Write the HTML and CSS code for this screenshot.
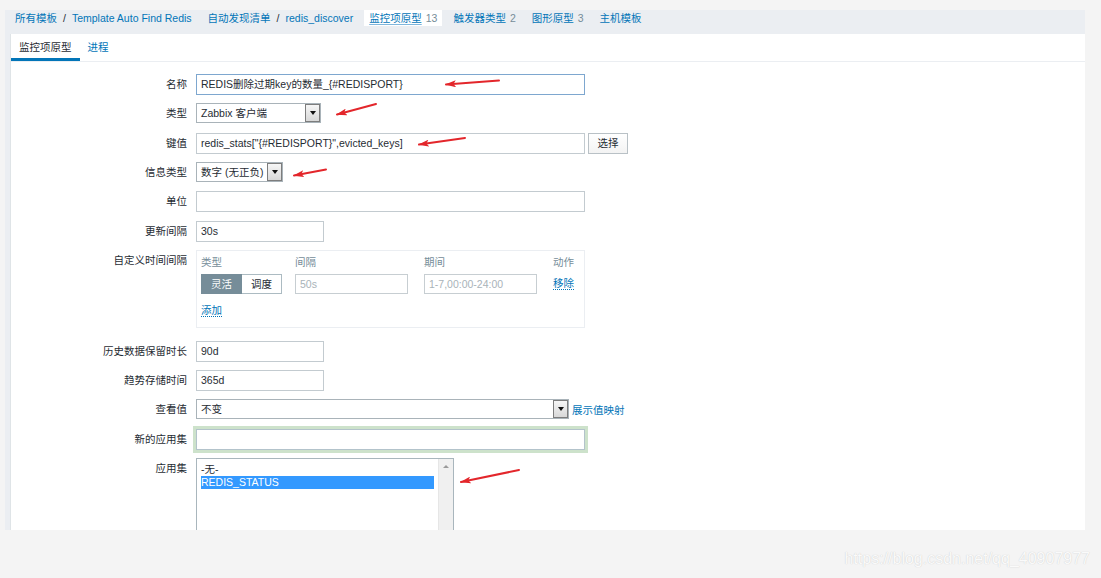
FILE: index.html
```html
<!DOCTYPE html>
<html>
<head>
<meta charset="utf-8">
<link rel="stylesheet" href="styles.css">
</head>
<body>
<div class="frame">
  <nav class="crumbs">
    <span class="crumb"><a>所有模板</a><span class="sep">/</span><a>Template Auto Find Redis</a></span>
    <span class="crumb"><a>自动发现清单</a><span class="sep">/</span><a>redis_discover</a></span>
    <span class="crumb active"><a>监控项原型</a><span class="count">13</span></span>
    <span class="crumb"><a>触发器类型</a><span class="count">2</span></span>
    <span class="crumb"><a>图形原型</a><span class="count">3</span></span>
    <span class="crumb"><a>主机模板</a></span>
  </nav>
  <div class="panel">
    <div class="tabs">
      <span class="tab on">监控项原型</span>
      <span class="tab">进程</span>
    </div>
    <div class="form">
      <div class="row">
        <label>名称</label>
        <div class="inp w-wide focus">REDIS删除过期key的数量_{#REDISPORT}</div>
      </div>
      <div class="row">
        <label>类型</label>
        <div class="sel w-type"><span class="txt">Zabbix 客户端</span><span class="arr"></span></div>
      </div>
      <div class="row">
        <label>键值</label>
        <div class="line">
          <div class="inp w-wide">redis_stats["{#REDISPORT}",evicted_keys]</div>
          <span class="btn">选择</span>
        </div>
      </div>
      <div class="row">
        <label>信息类型</label>
        <div class="sel w-info"><span class="txt">数字 (无正负)</span><span class="arr"></span></div>
      </div>
      <div class="row">
        <label>单位</label>
        <div class="inp w-wide"></div>
      </div>
      <div class="row">
        <label>更新间隔</label>
        <div class="inp w-short">30s</div>
      </div>
      <div class="row row-custom">
        <label>自定义时间间隔</label>
        <div class="custom">
          <div class="cgrid">
            <span class="ch">类型</span>
            <span class="ch">间隔</span>
            <span class="ch">期间</span>
            <span class="ch">动作</span>
            <div class="seg"><span class="on">灵活</span><span>调度</span></div>
            <div class="inp ph w-mid">50s</div>
            <div class="inp ph w-mid">1-7,00:00-24:00</div>
            <a class="dlink mid">移除</a>
          </div>
          <a class="dlink add">添加</a>
        </div>
      </div>
      <div class="row">
        <label>历史数据保留时长</label>
        <div class="inp w-short">90d</div>
      </div>
      <div class="row">
        <label>趋势存储时间</label>
        <div class="inp w-short">365d</div>
      </div>
      <div class="row">
        <label>查看值</label>
        <div class="line">
          <div class="sel w-view"><span class="txt">不变</span><span class="arr"></span></div>
          <a class="link">展示值映射</a>
        </div>
      </div>
      <div class="row">
        <label>新的应用集</label>
        <div class="inp w-wide glow"></div>
      </div>
      <div class="row">
        <label>应用集</label>
        <div class="listbox">
          <div class="opts">
            <div class="opt">-无-</div>
            <div class="opt selected">REDIS_STATUS</div>
          </div>
          <div class="sbar"><span class="up"></span></div>
        </div>
      </div>
    </div>
  </div>
</div>
<div class="watermark">https://blog.csdn.net/qq_40907977</div>

<svg class="notes" width="1101" height="578" viewBox="0 0 1101 578">
  <defs>
    <marker id="ah" markerWidth="11" markerHeight="7" refX="10" refY="3.5" orient="auto" markerUnits="userSpaceOnUse">
      <path d="M0,0 L11,3.5 L0,7 L2.5,3.5 z" fill="#e3262b"/>
    </marker>
  </defs>
  <g stroke="#e3262b" stroke-width="2" stroke-linecap="round" fill="none" marker-end="url(#ah)">
    <line x1="499" y1="80.5" x2="446" y2="84.5"/>
    <line x1="376" y1="104" x2="337" y2="114.5"/>
    <line x1="465" y1="138" x2="419" y2="144.5"/>
    <line x1="326" y1="169.5" x2="294" y2="175.5"/>
    <line x1="519" y1="470" x2="461" y2="482"/>
  </g>
</svg>
</body>
</html>
```

FILE: styles.css
```css
* { box-sizing: border-box; }
html, body { margin: 0; padding: 0; }
body {
  width: 1101px;
  height: 578px;
  overflow: hidden;
  position: relative;
  background: #f4f4f4;
  font-family: "Liberation Sans", "Noto Sans CJK SC", sans-serif;
  font-size: 10.5px;
  color: #1f2c33;
}
a { text-decoration: none; }

.frame {
  margin: 10px 16px 0 5px;
  height: 520px;
  background: #ebeef2;
  display: flex;
  flex-direction: column;
}

.crumbs {
  height: 24px;
  flex: none;
  display: flex;
  align-items: flex-start;
  padding-left: 5px;
  gap: 6px;
}
.crumb {
  display: flex;
  align-items: center;
  height: 16px;
  padding: 0 5px;
  white-space: nowrap;
  color: #0275b8;
  line-height: 14px;
}
.crumb a { color: #0275b8; }
.crumb .sep { color: #1f2c33; margin: 0 6px; }
.crumb.active { background: #fff; }
.crumb.active a { text-decoration: underline; text-decoration-color: #7fb6dc; text-underline-offset: 2px; }
.crumb .count { color: #768d99; margin-left: 4px; }

.panel {
  flex: 1;
  margin-left: 5px;
  background: #fff;
  border-left: 1px solid #dfe4e7;
  overflow: hidden;
}

.tabs {
  height: 28px;
  display: flex;
  border-bottom: 1px solid #ebeef2;
}
.tab {
  padding: 0 8px;
  height: 27px;
  line-height: 25px;
  padding-top: 1px;
  border-bottom: 3px solid transparent;
  color: #0275b8;
}
.tab.on { color: #1f2c33; border-bottom-color: #0275b8; }

.form { padding-top: 12px; }
.row {
  display: grid;
  grid-template-columns: 176px auto;
  column-gap: 9px;
  margin-bottom: 8.33px;
  justify-content: start;
  align-items: start;
}
.row label {
  text-align: right;
  line-height: 21px;
  white-space: nowrap;
}
.row-custom { margin-bottom: 12.7px; }

.line { display: flex; align-items: center; gap: 3px; }

.inp {
  height: 21px;
  border: 1px solid #c3cbd0;
  background: #fff;
  padding: 0 4px;
  line-height: 19px;
  white-space: nowrap;
  overflow: hidden;
}
.inp.focus { border-color: #7ea7cf; }
.inp.glow { border-color: #b3c3cb; box-shadow: 0 0 0 3px #cde2cb; }
.inp.ph { color: #a9b3b9; height: 20px; line-height: 18px; border-color: #c7ced2; }
.w-wide { width: 389px; }
.w-short { width: 128px; }
.w-mid { width: 113px; }

.btn {
  width: 40px;
  height: 21px;
  border: 1px solid #b9c1c6;
  background: linear-gradient(#ffffff, #f3f3f3);
  text-align: center;
  line-height: 19px;
}

.sel {
  display: flex;
  height: 20px;
  border: 1px solid #a9b3b9;
  background: #fff;
}
.sel .txt {
  flex: 1;
  padding-left: 4px;
  line-height: 18px;
  white-space: nowrap;
}
.sel .arr {
  width: 15px;
  margin: 0;
  border: 1px solid #7d7d7d;
  background: linear-gradient(#f6f6f6, #d8d8d8);
  display: flex;
  align-items: center;
  justify-content: center;
}
.sel .arr::after {
  content: "";
  border-left: 3px solid transparent;
  border-right: 3px solid transparent;
  border-top: 4px solid #111;
}
.w-type { width: 125px; }
.w-info { width: 87px; }
.w-view { width: 373px; }

.link { color: #0275b8; white-space: nowrap; }

.custom {
  width: 389px;
  height: 78px;
  border: 1px solid #ebeef2;
  padding: 5px 4px 0;
}
.cgrid {
  display: grid;
  grid-template-columns: 94px 129px 129px auto;
  row-gap: 5px;
  align-items: center;
}
.ch { color: #768d99; line-height: 13px; }
.seg { display: flex; }
.seg span {
  height: 20px;
  line-height: 18px;
  text-align: center;
  border: 1px solid #acbbc2;
  background: #fff;
}
.seg span:first-child { width: 41px; }
.seg span:last-child { width: 40px; border-left: none; }
.seg span.on { background: #768d99; border-color: #768d99; color: #fff; }

.dlink {
  color: #0275b8;
  border-bottom: 1px dotted #0275b8;
  line-height: 12px;
  justify-self: start;
}
.dlink.add { display: inline-block; margin-top: 10px; }

.listbox {
  width: 258px;
  height: 90px;
  border: 1px solid #a9b6bd;
  background: #fff;
  display: flex;
}
.opts { flex: 1; padding: 4px 4px 0 4px; }
.opt { line-height: 13px; height: 13px; white-space: nowrap; }
.opt.selected { background: #3399ff; color: #fff; }
.sbar {
  width: 15px;
  background: #f0f0f0;
  border-left: 1px solid #e6e6e6;
  display: flex;
  justify-content: center;
  padding-top: 6px;
}
.sbar .up {
  width: 0;
  height: 0;
  border-left: 3px solid transparent;
  border-right: 3px solid transparent;
  border-bottom: 3px solid #9a9a9a;
}

.watermark {
  margin-top: 20px;
  padding-right: 11px;
  text-align: right;
  font-family: "Liberation Sans", sans-serif;
  font-size: 16px;
  line-height: 18px;
  color: #fafafa;
  text-shadow: 0 0 1px #c4c4c4;
}

.notes {
  position: absolute;
  left: 0;
  top: 0;
  pointer-events: none;
}
```
